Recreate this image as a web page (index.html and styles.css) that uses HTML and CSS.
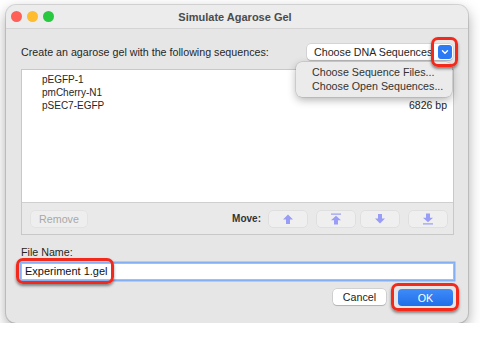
FILE: index.html
```html
<!DOCTYPE html>
<html>
<head>
<meta charset="utf-8">
<link rel="stylesheet" href="styles.css">
</head>
<body>
<div class="window">
  <div class="titlebar">
    <div class="lights">
      <span class="light red"></span>
      <span class="light yellow"></span>
      <span class="light green"></span>
    </div>
    <div class="title">Simulate Agarose Gel</div>
  </div>
  <div class="content">
    <div class="prompt-row">
      <span class="prompt">Create an agarose gel with the following sequences:</span>
      <div class="popup">
        <span class="popup-label">Choose DNA Sequences</span>
        <span class="popup-arrow">
          <svg width="8" height="6" viewBox="0 0 8 6"><path d="M1.5 1.8 L4 4.2 L6.5 1.8" fill="none" stroke="#fff" stroke-width="1.4" stroke-linecap="round" stroke-linejoin="round"/></svg>
        </span>
      </div>
    </div>
    <div class="listbox">
      <div class="list">
        <div class="item"><span>pEGFP-1</span><span></span></div>
        <div class="item"><span>pmCherry-N1</span><span></span></div>
        <div class="item"><span>pSEC7-EGFP</span><span class="bp">6826 bp</span></div>
      </div>
      <div class="toolbar">
        <button class="btn remove">Remove</button>
        <span class="move-label">Move:</span>
        <button class="btn mv mv1"><svg width="12" height="12" viewBox="0 0 12 12"><polygon points="6,1.5 11,6.5 8,6.5 8,11 4,11 4,6.5 1,6.5"/></svg></button>
        <button class="btn mv mv2"><svg width="12" height="12" viewBox="0 0 12 12"><rect x="1" y="0.5" width="10" height="1.2"/><polygon points="6,2.8 11,7.3 8,7.3 8,11.5 4,11.5 4,7.3 1,7.3"/></svg></button>
        <button class="btn mv mv3"><svg width="12" height="12" viewBox="0 0 12 12"><polygon points="6,10.5 11,5.5 8,5.5 8,1 4,1 4,5.5 1,5.5"/></svg></button>
        <button class="btn mv mv4"><svg width="12" height="12" viewBox="0 0 12 12"><polygon points="6,9.2 11,4.7 8,4.7 8,0.5 4,0.5 4,4.7 1,4.7"/><rect x="1" y="10.3" width="10" height="1.2"/></svg></button>
      </div>
    </div>
    <div class="file-label">File Name:</div>
    <div class="field">Experiment 1.gel</div>
    <div class="actions">
      <button class="btn cancel">Cancel</button>
      <button class="btn ok">OK</button>
    </div>
  </div>
  <div class="menu">
    <div class="menu-item">Choose Sequence Files...</div>
    <div class="menu-item">Choose Open Sequences...</div>
  </div>
  <div class="hl hl-arrow"></div>
  <div class="hl hl-field"></div>
  <div class="hl hl-ok"></div>
</div>
</body>
</html>
```
FILE: styles.css
```css
* { box-sizing: border-box; }
html, body { margin: 0; padding: 0; background: #fff; }
body {
  font-family: "Liberation Sans", Arial, sans-serif;
  font-size: 10.7px;
  color: #262626;
}
.window {
  position: relative;
  margin: 5px 0 0 6px;
  width: 462px;
  height: 318px;
  background: #e6e6e6;
  border-radius: 10px;
  box-shadow: 0 0 0 1px rgba(0,0,0,0.12), 0 5px 14px rgba(0,0,0,0.35);
}
.titlebar {
  position: relative;
  height: 24px;
  background: #ececec;
  border-bottom: 1px solid #d4d4d4;
  border-radius: 10px 10px 0 0;
  display: flex;
  align-items: center;
  justify-content: center;
}
.lights {
  position: absolute;
  left: 5px;
  top: 6px;
  display: flex;
  gap: 5px;
}
.light {
  width: 11px;
  height: 11px;
  border-radius: 50%;
  display: block;
}
.light.red { background: #fe5f57; }
.light.yellow { background: #febc2e; }
.light.green { background: #28c840; }
.title {
  font-weight: bold;
  font-size: 11px;
  color: #4b4b4b;
  margin-left: -4px;
}
.content {
  padding: 15px 14px 0 15px;
  display: flex;
  flex-direction: column;
}
.prompt-row {
  display: flex;
  align-items: center;
  justify-content: space-between;
  height: 16px;
}
.prompt { white-space: nowrap; }
.popup {
  display: flex;
  align-items: center;
  height: 16px;
  width: 146px;
  background: #fff;
  border-radius: 4px;
  box-shadow: 0 0 0 0.5px rgba(0,0,0,0.15), 0 1px 1px rgba(0,0,0,0.15);
  margin-right: 1px;
}
.popup-label {
  flex: 1;
  padding-left: 7px;
  white-space: nowrap;
  font-size: 10.7px;
}
.popup-arrow {
  width: 14px;
  height: 14px;
  margin-right: 1px;
  background: #2d7bf4;
  border-radius: 3px;
  display: flex;
  align-items: center;
  justify-content: center;
}
.listbox {
  margin-top: 9px;
  height: 166px;
  border: 1px solid #c8c8c8;
  display: flex;
  flex-direction: column;
}
.list {
  height: 133px;
  background: #fff;
  border-bottom: 1px solid #cfcfcf;
  padding: 3px 6px 0 20px;
  font-size: 10px;
}
.item {
  display: flex;
  justify-content: space-between;
  height: 13px;
  line-height: 13px;
}
.bp { font-size: 10.5px; }
.toolbar {
  flex: 1;
  display: flex;
  align-items: center;
  padding: 0 6px 0 9px;
  background: #e9e9e9;
}
.btn {
  font-family: inherit;
  font-size: 10.7px;
  border: none;
  padding: 0;
  margin: 0;
  display: flex;
  align-items: center;
  justify-content: center;
}
.remove {
  width: 56px;
  height: 16px;
  background: #eeeeee;
  color: #a8a8a8;
  border-radius: 4px;
  box-shadow: 0 0 0 0.5px rgba(0,0,0,0.06);
}
.move-label {
  margin-left: auto;
  margin-right: 8px;
  font-weight: bold;
  font-size: 10px;
  color: #333;
}
.mv {
  width: 38px;
  height: 16px;
  background: #efefef;
  border-radius: 4px;
  box-shadow: 0 0 0 0.5px rgba(0,0,0,0.08);
}
.mv svg { fill: #9a9df6; }
.mv2 { margin-left: 10px; }
.mv3 { margin-left: 6px; }
.mv4 { margin-left: 10px; }
.file-label {
  margin-top: 10px;
  height: 14px;
  line-height: 14px;
}
.field {
  margin-top: 5px;
  margin-left: 1px;
  margin-right: 1px;
  height: 15px;
  line-height: 15px;
  background: #fff;
  padding-left: 3px;
  font-size: 11px;
  color: #111;
  box-shadow: 0 0 0 1px #9fc0f7, 0 0 0 2.5px #84aff3;
}
.actions {
  margin-top: 10px;
  display: flex;
  justify-content: flex-end;
  gap: 12px;
  padding-right: 1px;
}
.cancel {
  width: 53px;
  height: 16px;
  background: #fff;
  border-radius: 4px;
  color: #222;
  box-shadow: 0 0 0 0.5px rgba(0,0,0,0.18), 0 1px 1px rgba(0,0,0,0.15);
}
.ok {
  width: 55px;
  height: 17px;
  background: linear-gradient(#3f8bf8, #1f6fe9);
  color: #fff;
  border-radius: 4px;
}
.menu {
  position: absolute;
  left: 290px;
  top: 57px;
  width: 156px;
  height: 35px;
  background: #ebebeb;
  border-radius: 6px;
  box-shadow: 0 0 0 0.5px rgba(0,0,0,0.15), 0 3px 8px rgba(0,0,0,0.3);
  padding: 3px 0 0 16px;
}
.menu-item {
  height: 14px;
  line-height: 14px;
  font-size: 10.7px;
  color: #333;
  white-space: nowrap;
}
.hl {
  position: absolute;
  border: 3px solid #f2291b;
  border-radius: 7px;
  box-shadow: 0 2px 3px rgba(0,0,0,0.45);
}
.hl-arrow { left: 425px; top: 32px; width: 27px; height: 30px; }
.hl-field { left: 10px; top: 253px; width: 98px; height: 26px; }
.hl-ok { left: 385px; top: 278px; width: 68px; height: 28px; }
```
